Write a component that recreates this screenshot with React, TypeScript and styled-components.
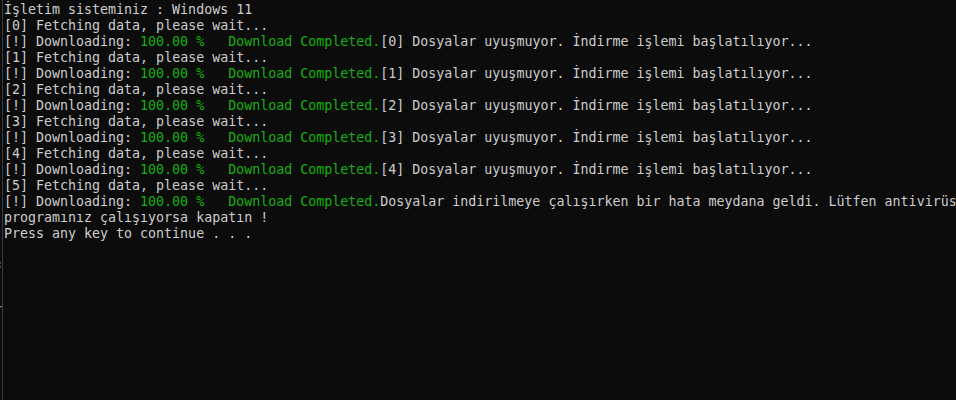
import React from "react";
import styled, { createGlobalStyle } from "styled-components";

const Global = createGlobalStyle`
  html, body { margin: 0; padding: 0; background: #0c0c0c; }
  body { width: 956px; height: 400px; overflow: hidden; }
`;

const Screen = styled.div`
  display: flex;
  width: 956px;
  height: 400px;
  background: #0c0c0c;
  overflow: hidden;
`;

const Gutter = styled.div`
  width: 2px;
  flex: none;
  overflow: hidden;
  display: flex;
  flex-direction: column;
  padding-top: 2px;
  font-family: "DejaVu Sans Mono", "Liberation Mono", monospace;
  font-size: 13.3px;
  line-height: 16px;
  color: #8a8a8a;
`;

const GutterCell = styled.div`
  height: 16px;
  white-space: pre;
  display: flex;
  justify-content: flex-end;
`;

const Pane = styled.div`
  flex: 1;
  border-left: 1px solid #3c3c3c;
  padding-left: 1px;
  padding-top: 2px;
  overflow: hidden;
`;

const Line = styled.div`
  height: 16px;
  line-height: 16px;
  white-space: pre;
  font-family: "DejaVu Sans Mono", "Liberation Mono", monospace;
  font-size: 13.3px;
  color: #cccccc;
`;

const Green = styled.span`
  color: #15b20d;
`;

const DL = () => (
  <>
    [!] Downloading: <Green>100.00 %   Download Completed.</Green>
  </>
);

export default function App() {
  const rows: React.ReactNode[] = [<>İşletim sisteminiz : Windows 11</>];
  for (let i = 0; i < 5; i++) {
    rows.push(<>[{i}] Fetching data, please wait...</>);
    rows.push(
      <>
        <DL />[{i}] Dosyalar uyuşmuyor. İndirme işlemi başlatılıyor...
      </>
    );
  }
  rows.push(<>[5] Fetching data, please wait...</>);
  rows.push(
    <>
      <DL />Dosyalar indirilmeye çalışırken bir hata meydana geldi. Lütfen antivirüs
    </>
  );
  rows.push(<>programınız çalışıyorsa kapatın !</>);
  rows.push(<>Press any key to continue . . .</>);

  const gutter = Array.from({ length: 25 }, (_, i) =>
    i === 16 ? "«" : i === 19 ? "T" : ""
  );

  return (
    <>
      <Global />
      <Screen>
        <Gutter>
          {gutter.map((g, i) => (
            <GutterCell key={i}>{g}</GutterCell>
          ))}
        </Gutter>
        <Pane>
          {rows.map((r, i) => (
            <Line key={i}>{r}</Line>
          ))}
        </Pane>
      </Screen>
    </>
  );
}
